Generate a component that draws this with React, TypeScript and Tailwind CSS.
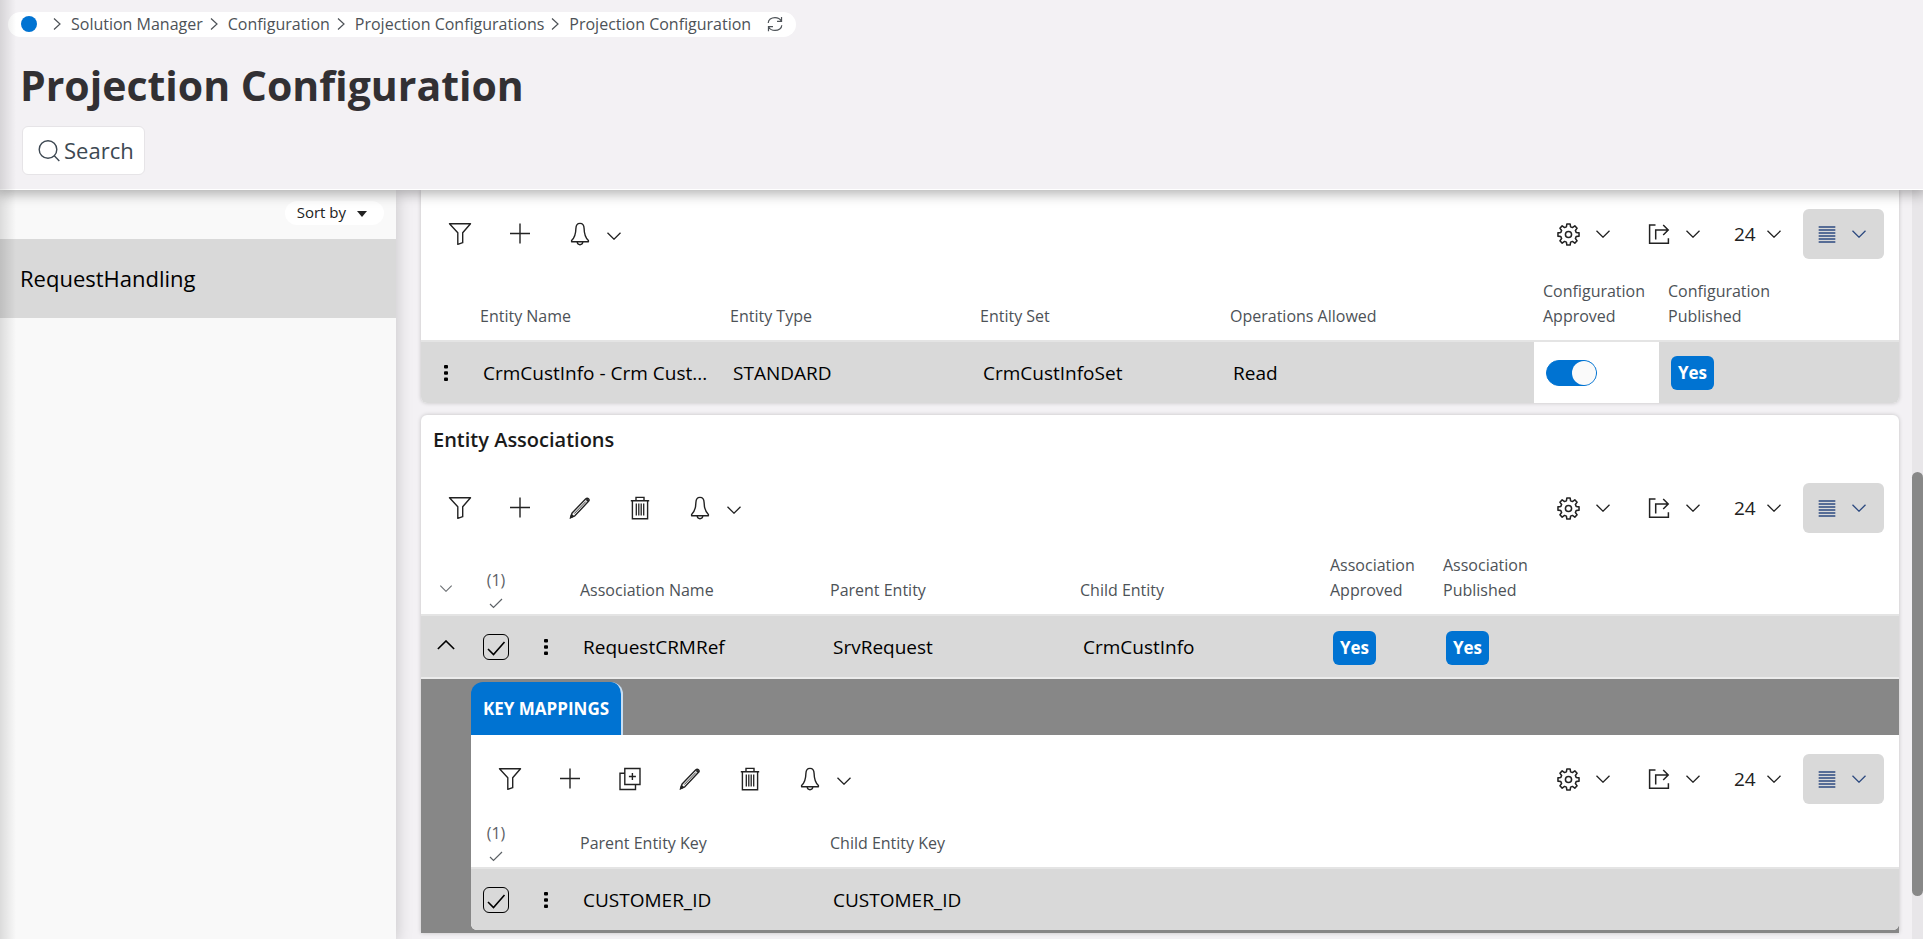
import { useState } from "react";
import type { ReactNode } from "react";

type IconProps = { className?: string };

function Icon({ className = "size-6", children }: { className?: string; children: ReactNode }) {
  return (
    <svg
      viewBox="0 0 24 24"
      fill="none"
      stroke="currentColor"
      strokeWidth="1.4"
      className={`shrink-0 ${className}`}
      aria-hidden="true"
    >
      {children}
    </svg>
  );
}

const FilterIcon = () => (
  <Icon>
    <path d="M1.5 1.7h21l-7.8 9v10L9.8 22.3V10.7z" strokeLinejoin="round" />
  </Icon>
);

const PlusIcon = () => (
  <Icon>
    <path d="M12 1.5v20M2 11.500h20" />
  </Icon>
);

const BellIcon = () => (
  <Icon>
    <path
      d="M12 1.400c-2.700 0-4 1.900-4.100 5-.1 5.600-.9 8.900-4.300 12.100v1.300h16.800v-1.300c-3.400-3.200-4.200-6.500-4.300-12.100-.1-3.100-1.400-5-4.100-5z"
      strokeLinejoin="round"
    />
    <path d="M9.200 20c.2 1.700 1.300 2.700 2.800 2.700s2.600-1 2.800-2.700" />
  </Icon>
);

const PencilIcon = () => (
  <Icon>
    <path
      d="M2.600 21.700l1.500-4.700L17.600 3c.9-.9 2.100-1 2.900-.3.800.8.700 2-.2 2.900L6.800 19.800z"
      strokeLinejoin="round"
    />
    <path d="M6.200 17.600L17.900 5.500" strokeWidth="0.900" />
    <path d="M18.400 3.200l2 1.900" strokeWidth="2" />
    <path d="M2.600 21.700l.9-3 1.800 1.700z" fill="currentColor" />
  </Icon>
);

const TrashIcon = () => (
  <Icon>
    <path d="M2.800 4.700h18.400M8 4.500V1.400h8v3.100M4.400 4.700v18h15.200v-18" />
    <path d="M8.300 7.500v12M10.800 7.500v12M13.200 7.500v12M15.700 7.500v12" strokeWidth="1.300" />
  </Icon>
);

const DuplicateIcon = () => (
  <Icon>
    <path d="M6.800 1.500h15.200v16H6.800zM6.500 6.200H2v16.300h15.500v-4.700M14.400 6v7M10.900 9.500h7" />
  </Icon>
);

const GearIcon = () => (
  <Icon className="size-[23px]">
    <path
      d="M10.300 1h3.400l.5 3 1.900.8 2.500-1.800 2.400 2.400-1.800 2.500.8 1.900 3 .5v3.400l-3 .5-.8 1.900 1.800 2.500-2.400 2.400-2.500-1.800-1.900.8-.5 3h-3.400l-.5-3-1.900-.8L5.400 21 3 18.600l1.800-2.500-.8-1.900-3-.5v-3.400l3-.5.8-1.900L3 5.400 5.400 3l2.500 1.800 1.900-.8z"
      strokeLinejoin="round"
      strokeWidth="1.600"
    />
    <circle cx="12" cy="12" r="3.200" strokeWidth="1.600" />
  </Icon>
);

const ShareIcon = () => (
  <Icon>
    <path d="M8.500 3H2.600v18.300h18.800v-5" strokeWidth="1.500" />
    <path d="M8.700 17.500V8h12M16.200 3l5 5-5 5" strokeWidth="1.500" />
  </Icon>
);

const LinesIcon = () => (
  <Icon className="size-5">
    <path d="M2 3.600h20M2 7.200h20M2 10.800h20M2 14.400h20M2 18h20M2 21.600h20" strokeWidth="1.800" />
  </Icon>
);

const SearchIcon = () => (
  <Icon>
    <circle cx="11" cy="10.500" r="8.800" />
    <path d="M17.300 16.800l5 5.200" />
  </Icon>
);

const RefreshIcon = () => (
  <Icon className="size-[18px]">
    <path
      d="M3 10.500C3 6.500 7 3.400 12 3.400c4 0 6.900 1.800 8.500 4.700M20.700 2.500v5.900h-6M21 13.500c0 4-4 7.100-9 7.100-4 0-6.900-1.800-8.500-4.700M3.300 21.500v-5.900h6"
      strokeWidth="1.600"
    />
  </Icon>
);

function Chevron({ className = "h-2 w-4" }: IconProps) {
  return (
    <svg viewBox="0 0 16 8" fill="none" stroke="currentColor" strokeWidth="1.300" className={`shrink-0 ${className}`} aria-hidden="true">
      <path d="M1.500 .8L8 7.200 14.500 .8" />
    </svg>
  );
}

const Separator = () => (
  <svg viewBox="0 0 8 14" fill="none" stroke="currentColor" strokeWidth="1.200" className="h-3.5 w-2 shrink-0" aria-hidden="true">
    <path d="M1 1.500L7 7l-6 5.500" />
  </svg>
);

const KebabIcon = () => (
  <svg viewBox="0 0 4 18" fill="currentColor" className="h-[18px] w-1" aria-hidden="true">
    <rect y="1" width="4" height="3.600" rx="1" />
    <rect y="7.200" width="4" height="3.600" rx="1" />
    <rect y="13.400" width="4" height="3.600" rx="1" />
  </svg>
);

const toolIcons = {
  Filter: FilterIcon,
  Add: PlusIcon,
  Duplicate: DuplicateIcon,
  Edit: PencilIcon,
  Delete: TrashIcon,
};

type Tool = keyof typeof toolIcons;

function Toolbar({ tools }: { tools: Tool[] }) {
  return (
    <div className="flex items-center justify-between pr-[15px] pl-[27px] pt-[19px] text-[#222]">
      <div className="flex items-center gap-9">
        {tools.map((tool) => {
          const Glyph = toolIcons[tool];
          return (
            <button key={tool} type="button" aria-label={tool}>
              <Glyph />
            </button>
          );
        })}
        <button type="button" aria-label="Notifications" className="flex items-center gap-3.5">
          <BellIcon />
          <Chevron className="mt-1 h-2 w-4" />
        </button>
      </div>
      <div className="flex items-center">
        <button type="button" aria-label="Settings" className="mr-9 flex items-center gap-[15px]">
          <GearIcon />
          <Chevron />
        </button>
        <button type="button" aria-label="Export" className="mr-[33px] flex items-center gap-3.5">
          <ShareIcon />
          <Chevron />
        </button>
        <div className="mr-[21px] grid items-center">
          <select
            aria-label="Rows per page"
            defaultValue="24"
            className="col-start-1 row-start-1 w-12 appearance-none bg-transparent text-[19px] leading-6"
          >
            <option>24</option>
            <option>48</option>
            <option>96</option>
          </select>
          <Chevron className="pointer-events-none col-start-1 row-start-1 h-2 w-4 justify-self-end" />
        </div>
        <button
          type="button"
          aria-label="List view"
          className="flex h-[50px] w-[81px] items-center gap-3.5 rounded-md bg-[#d9d9d9] pl-3.5 text-[#2d4a80]"
        >
          <LinesIcon />
          <Chevron />
        </button>
      </div>
    </div>
  );
}

function Th({ children, className = "" }: { children?: ReactNode; className?: string }) {
  return (
    <th className={`pr-2 pb-[11px] pl-[9px] text-left align-bottom text-base leading-[25px] font-normal text-[#4d5257] ${className}`}>
      {children}
    </th>
  );
}

function CountTh() {
  return (
    <th className="pb-1 align-bottom font-normal text-[#5c6166]">
      <div className="flex flex-col items-center gap-1">
        <span className="text-base leading-6">(1)</span>
        <svg viewBox="0 0 14 14" fill="none" stroke="currentColor" strokeWidth="1.200" className="size-3.5" aria-hidden="true">
          <path d="M1 8l3.500 3.500L13 3" />
        </svg>
      </div>
    </th>
  );
}

function Td({ children, className = "pt-0.5" }: { children?: ReactNode; className?: string }) {
  return <td className={`truncate pr-2 pl-3 text-[19px] ${className}`}>{children}</td>;
}

function KebabTd() {
  return (
    <td>
      <button type="button" aria-label="Row actions" className="mx-auto block">
        <KebabIcon />
      </button>
    </td>
  );
}

function CheckTd({ label }: { label: string }) {
  return (
    <td>
      <label className="mx-auto grid size-[26px]">
        <input
          type="checkbox"
          defaultChecked
          aria-label={label}
          className="peer col-start-1 row-start-1 size-[26px] appearance-none rounded-md border border-black"
        />
        <svg
          viewBox="0 0 26 26"
          fill="none"
          stroke="currentColor"
          strokeWidth="1.600"
          className="pointer-events-none invisible col-start-1 row-start-1 peer-checked:visible"
          aria-hidden="true"
        >
          <path d="M5 15l5.500 5.500L21.500 8" />
        </svg>
      </label>
    </td>
  );
}

function Badge() {
  return (
    <span className="flex h-[34px] w-[43px] items-center justify-center rounded-md bg-[#0073d2] text-[17px] leading-6 font-bold text-white">
      Yes
    </span>
  );
}

function Toggle() {
  const [on, setOn] = useState(true);
  return (
    <button
      type="button"
      role="switch"
      aria-checked={on}
      aria-label="Configuration Approved"
      onClick={() => setOn(!on)}
      className={`flex h-[26px] w-[51px] items-center rounded-full border border-[#0073d2] ${on ? "justify-end bg-[#0073d2]" : "justify-start bg-white"}`}
    >
      <span className={`size-6 rounded-full ${on ? "bg-[#fafafa]" : "bg-[#0073d2]"}`} />
    </button>
  );
}

const tableClass = "w-full table-fixed border-collapse text-black";
const rowClass = "h-[62px] border-t-2 border-[#e4e4e4] bg-[#d9d9d9]";

function EntitySet() {
  return (
    <section className="overflow-hidden rounded-b-md bg-white shadow-[0_0_4px_rgba(0,0,0,0.2)]">
      <Toolbar tools={["Filter", "Add"]} />
      <table className={tableClass}>
        <colgroup>
          <col className="w-[50px]" />
          <col className="w-[250px]" />
          <col className="w-[250px]" />
          <col className="w-[250px]" />
          <col className="w-[313px]" />
          <col className="w-[125px]" />
          <col />
        </colgroup>
        <thead>
          <tr className="h-[82px]">
            <Th />
            <Th>Entity Name</Th>
            <Th>Entity Type</Th>
            <Th>Entity Set</Th>
            <Th>Operations Allowed</Th>
            <Th>Configuration Approved</Th>
            <Th>
              Configuration
              <br />
              Published
            </Th>
          </tr>
        </thead>
        <tbody>
          <tr className={rowClass}>
            <KebabTd />
            <Td>CrmCustInfo - Crm Cust...</Td>
            <Td>STANDARD</Td>
            <Td>CrmCustInfoSet</Td>
            <Td>Read</Td>
            <Td className="bg-white">
              <Toggle />
            </Td>
            <Td className="pt-0">
              <Badge />
            </Td>
          </tr>
        </tbody>
      </table>
    </section>
  );
}

function KeyMappings() {
  return (
    <div className="border-t-2 border-[#ececec] bg-[#878787] pt-[3px] pb-[3px] pl-[50px]">
      <button
        type="button"
        role="tab"
        aria-selected="true"
        className="block h-[53px] rounded-t-xl border-r-2 border-[#c9dff3] bg-[#0073d2] px-3 text-[17px] font-bold text-white"
      >
        KEY MAPPINGS
      </button>
      <div className="overflow-hidden rounded-b-md bg-white">
        <Toolbar tools={["Filter", "Add", "Duplicate", "Edit", "Delete"]} />
        <table className={tableClass}>
          <colgroup>
            <col className="w-[50px]" />
            <col className="w-[50px]" />
            <col className="w-[250px]" />
            <col className="w-[250px]" />
            <col />
          </colgroup>
          <thead>
            <tr className="h-16">
              <CountTh />
              <Th />
              <Th>Parent Entity Key</Th>
              <Th>Child Entity Key</Th>
              <Th />
            </tr>
          </thead>
          <tbody>
            <tr className={rowClass}>
              <CheckTd label="Select CUSTOMER_ID" />
              <KebabTd />
              <Td>CUSTOMER_ID</Td>
              <Td>CUSTOMER_ID</Td>
              <Td />
            </tr>
          </tbody>
        </table>
      </div>
    </div>
  );
}

function EntityAssociations() {
  return (
    <section className="rounded-t-md bg-white shadow-[0_0_4px_rgba(0,0,0,0.2)]">
      <h2 className="px-3 pt-[11px] pb-2.5 text-xl leading-7 font-semibold text-[#1a1a1a]">Entity Associations</h2>
      <Toolbar tools={["Filter", "Add", "Edit", "Delete"]} />
      <table className={tableClass}>
        <colgroup>
          <col className="w-[50px]" />
          <col className="w-[50px]" />
          <col className="w-[50px]" />
          <col className="w-[250px]" />
          <col className="w-[250px]" />
          <col className="w-[250px]" />
          <col className="w-[113px]" />
          <col className="w-[113px]" />
          <col />
        </colgroup>
        <thead>
          <tr className="h-[82px]">
            <th className="pb-[22px] align-bottom text-[#6b6f73]">
              <button type="button" aria-label="Expand all rows" className="mx-auto block">
                <Chevron className="h-[7px] w-3.5" />
              </button>
            </th>
            <CountTh />
            <Th />
            <Th>Association Name</Th>
            <Th>Parent Entity</Th>
            <Th>Child Entity</Th>
            <Th>Association Approved</Th>
            <Th>Association Published</Th>
            <Th />
          </tr>
        </thead>
        <tbody>
          <tr className={rowClass}>
            <td>
              <button type="button" aria-label="Collapse row" className="mx-auto block pb-1">
                <Chevron className="h-2.5 w-5 rotate-180" />
              </button>
            </td>
            <CheckTd label="Select RequestCRMRef" />
            <KebabTd />
            <Td>RequestCRMRef</Td>
            <Td>SrvRequest</Td>
            <Td>CrmCustInfo</Td>
            <Td>
              <Badge />
            </Td>
            <Td>
              <Badge />
            </Td>
            <Td />
          </tr>
        </tbody>
      </table>
      <KeyMappings />
    </section>
  );
}

const crumbs = ["Solution Manager", "Configuration", "Projection Configurations", "Projection Configuration"];

function Header() {
  return (
    <header className="relative z-10 flex flex-col items-start border-b border-white bg-[#f3f1f4] pt-3 pb-3.5 shadow-[0_2px_12px_2px_rgba(0,0,0,0.3)]">
      <nav
        aria-label="Breadcrumb"
        className="ml-2 flex h-[25px] items-center rounded-full bg-white pr-3 pb-px pl-[13px] text-base leading-6 text-[#4d5257]"
      >
        <a href="#home" aria-label="Home" className="mr-4 size-4 rounded-full bg-[#0073d2]" />
        {crumbs.map((crumb) => (
          <span key={crumb} className="mr-[7px] flex items-center gap-2.5">
            <Separator />
            <a href="#crumb">{crumb}</a>
          </span>
        ))}
        <button type="button" aria-label="Refresh" className="ml-2">
          <RefreshIcon />
        </button>
      </nav>
      <h1 className="mt-6 ml-5 text-[41px] leading-12 font-bold text-[#323033]">Projection Configuration</h1>
      <button
        type="button"
        className="mt-[17px] ml-[22px] flex h-[49px] items-center gap-[3px] rounded-md border border-[#e6e4e7] bg-white pr-2.5 pl-3.5 text-[22px] text-[#3d4852]"
      >
        <SearchIcon />
        Search
      </button>
    </header>
  );
}

export default function App() {
  return (
    <div className="relative flex min-h-screen flex-col bg-[#f3f1f4] font-['Open_Sans',sans-serif]">
      <Header />
      <div className="flex grow">
        <aside className="w-[396px] shrink-0 bg-[#f9f9f9] shadow-[0_4px_16px_rgba(0,0,0,0.2)]">
          <div className="flex h-[49px] justify-end pt-[11px] pr-3">
            <button type="button" className="flex h-6 items-center gap-[11px] rounded-full bg-white pr-[17px] pb-0.5 pl-3 text-[15px] text-[#222]">
              Sort by
              <svg viewBox="0 0 10 6" className="mt-1 h-1.5 w-2.5" fill="currentColor" aria-hidden="true">
                <path d="M0 0h10L5 6z" />
              </svg>
            </button>
          </div>
          <a href="#RequestHandling" className="flex h-[79px] items-center bg-[#d9d9d9] pl-5 text-[22px] text-black">
            RequestHandling
          </a>
        </aside>
        <main className="flex min-w-0 grow flex-col gap-3 pr-[13px] pb-1 pl-[25px]">
          <EntitySet />
          <EntityAssociations />
        </main>
        <div className="flex w-[11px] shrink-0 flex-col bg-[#e8e6e9]" aria-hidden="true">
          <div className="grow-[282]" />
          <div className="grow-[424] rounded-full bg-[#888]" />
          <div className="grow-[43]" />
        </div>
      </div>
      <div className="pointer-events-none absolute inset-y-0 left-0 z-20 w-4 bg-linear-to-r from-black/12 to-transparent" aria-hidden="true" />
    </div>
  );
}
